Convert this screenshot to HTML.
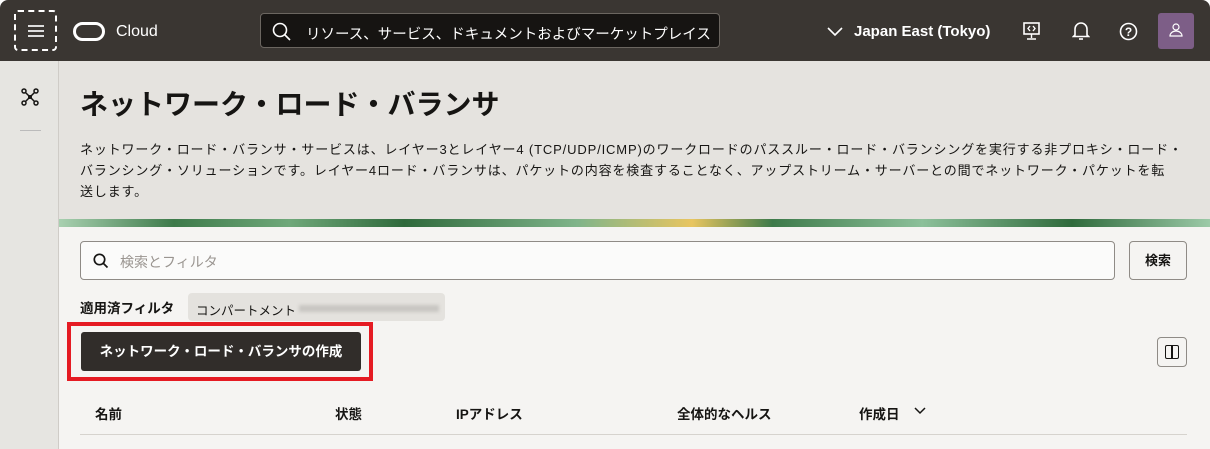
<!DOCTYPE html><html><head><meta charset="utf-8"><style>
*{box-sizing:border-box;margin:0;padding:0}
body{width:1210px;height:449px;overflow:hidden;background:#fff;font-family:"Liberation Sans","Noto Sans CJK JP",sans-serif;color:#161513;position:relative}
.top{position:absolute;left:0;top:0;width:1210px;height:61px;background:#3a3632;border-radius:8px 8px 0 0}
.side{position:absolute;left:0;top:61px;width:59px;height:388px;background:#e6e5e1;border-right:1px solid #cfccc7}
.head{position:absolute;left:59px;top:61px;width:1151px;height:158px;background:#e5e3df}
.banner{position:absolute;left:59px;top:219px;width:1151px;height:8px;background:linear-gradient(90deg,#a8d0b0,#3d7a4a 10%,#6fa87a 20%,#2f6a3c 30%,#7fb48a 45%,#e8c560 55%,#3d7a4a 62%,#8cc09a 75%,#2f6a3c 88%,#9ccaa8)}
.main{position:absolute;left:59px;top:227px;width:1151px;height:222px;background:#f5f4f2}
.t{position:absolute;white-space:nowrap}
</style></head><body>
<div class="top">
 <div style="position:absolute;left:14px;top:10px;width:43px;height:41px;border:2px dashed #fff;border-radius:4px"></div>
 <div style="position:absolute;left:28px;top:25px;width:16px;height:2px;background:#ddd;box-shadow:0 5px 0 #ddd,0 10px 0 #ddd"></div>
 <div style="position:absolute;left:73px;top:22px;width:32px;height:19px;border:3.5px solid #fff;border-radius:10px"></div>
 <div class="t" style="left:116px;top:23px;color:#fff;font-size:16px">Cloud</div>
 <div style="position:absolute;left:260px;top:13px;width:460px;height:35px;background:#161412;border:1px solid #6b6660;border-radius:4px"></div>
 <svg style="position:absolute;left:272px;top:22px" width="20" height="20"><circle cx="8" cy="8" r="6.5" stroke="#fff" stroke-width="1.6" fill="none"/><path d="M13 13l5 5" stroke="#fff" stroke-width="1.6"/></svg>
 <div class="t" style="left:306px;top:23px;color:#fff;font-size:14.5px;width:410px;overflow:hidden">リソース、サービス、ドキュメントおよびマーケットプレイス</div>
 <svg style="position:absolute;left:827px;top:27px" width="16" height="10"><path d="M1 1l7 7 7-7" stroke="#fff" stroke-width="1.6" fill="none"/></svg>
 <div class="t" style="left:854px;top:23px;color:#fff;font-size:15px;font-weight:bold">Japan East (Tokyo)</div>
 <svg style="position:absolute;left:1022px;top:22px" width="20" height="20"><rect x="2" y="1" width="15" height="11" stroke="#fff" stroke-width="1.6" fill="none"/><path d="M9.5 12v4M5 17h9M8 4l-2 2.5 2 2.5M11 4l2 2.5-2 2.5" stroke="#fff" stroke-width="1.4" fill="none"/></svg>
 <svg style="position:absolute;left:1072px;top:21px" width="18" height="20"><path d="M3 14V8a6 6 0 0112 0v6l1.5 1.5h-15z" stroke="#fff" stroke-width="1.6" fill="none"/><path d="M7 18h4" stroke="#fff" stroke-width="1.6"/></svg>
 <svg style="position:absolute;left:1119px;top:22px" width="20" height="20"><circle cx="9.5" cy="9.5" r="8" stroke="#fff" stroke-width="1.6" fill="none"/><text x="9.5" y="14" font-size="12" font-weight="bold" fill="#fff" text-anchor="middle" font-family="Liberation Sans">?</text></svg>
 <div style="position:absolute;left:1158px;top:13px;width:36px;height:36px;background:#7d5e87;border-radius:3px"></div>
 <svg style="position:absolute;left:1168px;top:22px" width="16" height="18"><circle cx="8" cy="5" r="3" stroke="#fff" stroke-width="1.2" fill="none"/><path d="M2 14a6 5 0 0112 0z" stroke="#fff" stroke-width="1.2" fill="none"/></svg>
</div>
<div class="side">
 <svg style="position:absolute;left:21px;top:27px" width="18" height="18"><circle cx="3" cy="3" r="2" stroke="#161513" stroke-width="1.5" fill="none"/><circle cx="15" cy="3" r="2" stroke="#161513" stroke-width="1.5" fill="none"/><circle cx="3" cy="15" r="2" stroke="#161513" stroke-width="1.5" fill="none"/><circle cx="15" cy="15" r="2" stroke="#161513" stroke-width="1.5" fill="none"/><circle cx="9" cy="9" r="2" fill="#161513"/><path d="M4.5 4.5l9 9M13.5 4.5l-9 9" stroke="#161513" stroke-width="1.5"/></svg>
 <div style="position:absolute;left:20px;top:69px;width:21px;height:1px;background:#bbb"></div>
</div>
<div class="head">
 <div class="t" style="left:21px;top:22px;font-size:28px;font-weight:bold">ネットワーク・ロード・バランサ</div>
 <div style="position:absolute;left:21px;top:78px;width:1125px;font-size:13px;line-height:21px;letter-spacing:0.85px;white-space:nowrap">ネットワーク・ロード・バランサ・サービスは、レイヤー3とレイヤー4 (TCP/UDP/ICMP)のワークロードのパススルー・ロード・バランシングを実行する非プロキシ・ロード・<br>バランシング・ソリューションです。レイヤー4ロード・バランサは、パケットの内容を検査することなく、アップストリーム・サーバーとの間でネットワーク・パケットを転<br>送します。</div>
</div>
<div class="banner"></div>
<div class="main">
 <div style="position:absolute;left:21px;top:14px;width:1035px;height:39px;background:#fbfbfa;border:1px solid #8f8b86;border-radius:4px"></div>
 <svg style="position:absolute;left:34px;top:26px" width="16" height="16"><circle cx="6.5" cy="6.5" r="5.2" stroke="#161513" stroke-width="1.7" fill="none"/><path d="M10.5 10.5l4 4" stroke="#161513" stroke-width="1.7"/></svg>
 <div class="t" style="left:61px;top:25px;font-size:14px;color:#9a9590">検索とフィルタ</div>
 <div style="position:absolute;left:1070px;top:14px;width:58px;height:39px;background:#f5f4f2;border:1px solid #8f8b86;border-radius:4px;font-size:13px;font-weight:bold;text-align:center;line-height:37px">検索</div>
 <div class="t" style="left:21px;top:70px;font-size:13.5px;font-weight:bold">適用済フィルタ</div>
 <div style="position:absolute;left:129px;top:66px;width:257px;height:28px;background:#e4e2de;border-radius:4px"></div>
 <div class="t" style="left:137px;top:73px;font-size:12.5px">コンパートメント</div>
 <div style="position:absolute;left:240px;top:78px;width:140px;height:7px;background:#c8c6c2;filter:blur(1.5px)"></div>
 <div style="position:absolute;left:8px;top:95px;width:306px;height:59px;border:4px solid #e51b23"></div>
 <div style="position:absolute;left:22px;top:105px;width:280px;height:39px;background:#312d2a;border-radius:3px;color:#fff;font-size:13.5px;font-weight:bold;text-align:center;line-height:39px">ネットワーク・ロード・バランサの作成</div>
 <div style="position:absolute;left:1098px;top:110px;width:30px;height:30px;border:1px solid #8f8b86;border-radius:4px"></div>
 <div style="position:absolute;left:1106px;top:118px;width:14px;height:14px;border:1.6px solid #161513;border-radius:2px"></div>
 <div style="position:absolute;left:1112px;top:118px;width:1.6px;height:14px;background:#161513"></div>
 <div class="t" style="left:36px;top:176px;font-size:13.5px;font-weight:bold">名前</div>
 <div class="t" style="left:276px;top:176px;font-size:13.5px;font-weight:bold">状態</div>
 <div class="t" style="left:397px;top:176px;font-size:13.5px;font-weight:bold">IPアドレス</div>
 <div class="t" style="left:618px;top:176px;font-size:13.5px;font-weight:bold">全体的なヘルス</div>
 <div class="t" style="left:800px;top:176px;font-size:13.5px;font-weight:bold">作成日</div>
 <svg style="position:absolute;left:855px;top:180px" width="12" height="8"><path d="M1 1l5 5 5-5" stroke="#161513" stroke-width="1.5" fill="none"/></svg>
 <div style="position:absolute;left:21px;top:207px;width:1107px;height:1px;background:#d6d3ce"></div>
</div>
</body></html>
